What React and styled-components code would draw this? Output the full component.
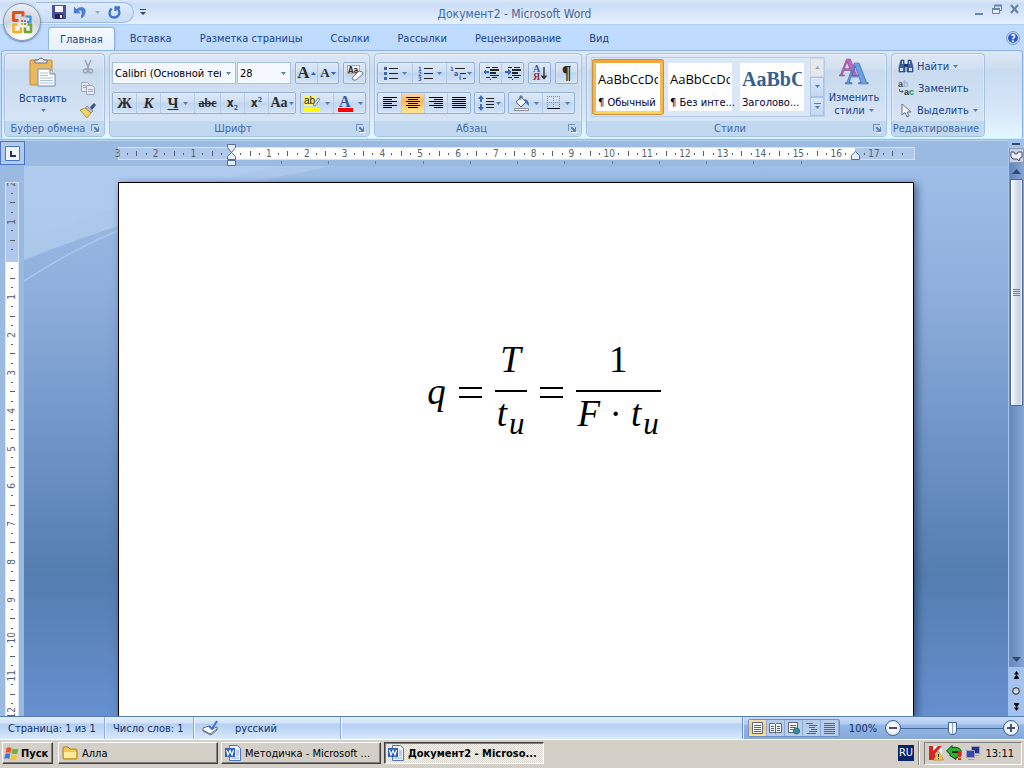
import React, { useState } from 'react';
import styled, { createGlobalStyle, css } from 'styled-components';

const GlobalStyle = createGlobalStyle`
  * {
    box-sizing: border-box;
  }

  body {
    margin: 0;
    overflow: hidden;
    font-family: 'DejaVu Sans Condensed', 'DejaVu Sans', sans-serif;
    font-size: 11px;
    color: #15428b;
  }

  button, select, input {
    font: inherit;
    color: inherit;
    margin: 0;
    padding: 0;
    border: 0;
    background: none;
  }

  svg {
    display: block;
    flex: none;
  }
`;

const Window = styled.div`
  display: flex;
  flex-direction: column;
  height: 100vh;
  background: #bfdbff;
`;

/* ---------- title bar ---------- */

const TitleBar = styled.header`
  position: relative;
  display: flex;
  align-items: center;
  height: 25px;
  flex: none;
  padding: 0 3px 0 36px;
  background: linear-gradient(#dce9fa 0, #cadef7 4px, #dbe8fa 16px, #e6f0fc 24px);
  border-bottom: 1px solid #b0cff7;
`;

const OfficeButton = styled.button`
  position: absolute;
  z-index: 2;
  left: 3px;
  top: 3px;
  width: 38px;
  height: 38px;
  border-radius: 50%;
  border: 1px solid #8596b0;
  display: grid;
  place-items: center;
  background: radial-gradient(circle at 50% 95%, #ffffff 0, #eef1f5 30%, #cdd4de 55%, #f1f4f8 90%);
  box-shadow: 0 1px 2px rgba(40, 70, 120, 0.6);
`;

const QuickAccess = styled.div`
  display: flex;
  align-items: center;
  height: 21px;
  width: 98px;
  padding-left: 16px;
  gap: 8px;
  border: 1px solid #9ebce4;
  border-left: 0;
  border-radius: 0 11px 11px 0;
  background: linear-gradient(#dfebfb, #c8dcf6);
`;

const IconButton = styled.button`
  display: flex;
  align-items: center;
  justify-content: center;
`;

const QuickMenu = styled(IconButton)`
  margin-left: 6px;
`;

const Title = styled.h1`
  flex: 1;
  margin: 0;
  padding: 4px 90px 0 0;
  font-size: 12px;
  font-weight: 400;
  text-align: center;
  color: #4a6591;

  span {
    color: #3e6aaa;
  }
`;

const WindowControls = styled.div`
  display: flex;
  gap: 6px;
  padding-bottom: 4px;
`;

/* ---------- tabs ---------- */

const TabBar = styled.nav`
  display: flex;
  align-items: flex-end;
  height: 25px;
  flex: none;
  padding: 0 4px 0 45px;
  background: #bfdbff;
`;

const Tab = styled.button`
  height: 23px;
  padding: 0 14px;
  white-space: nowrap;
  ${props => props.$active && css`
    margin: 0 1px -1px 3px;
    padding: 0 11px;
    height: 24px;
    border: 1px solid #8db2e3;
    border-bottom: 0;
    border-radius: 4px 4px 0 0;
    background: linear-gradient(#f4f9ff, #e5effb);
    box-shadow: inset 1px 1px 0 #ffffff, 1px 0 2px #a9c6ea;
  `}
`;

const HelpButton = styled(IconButton)`
  margin-left: auto;
  align-self: center;
`;

/* ---------- ribbon ---------- */

const Ribbon = styled.section`
  display: flex;
  align-items: flex-start;
  gap: 4px;
  height: 89px;
  flex: none;
  margin: 0 1px;
  padding: 2px;
  border: 1px solid #8db2e3;
  border-bottom-color: #c6f1fb;
  border-radius: 4px;
  background: linear-gradient(#dbe7f5 0, #cfdff0 16px, #c8dbf0 17px, #d7e6f8 60px, #e2f7ff 86px);
`;

const GroupBox = styled.section`
  display: flex;
  flex-direction: column;
  flex: none;
  width: ${props => props.$width};
  height: 84px;
  border: 1px solid #a6c1e1;
  border-radius: 4px;
  overflow: hidden;
  box-shadow: inset 0 0 0 1px rgba(255, 255, 255, 0.35);
  background: linear-gradient(#dde8f5 0, #d3e1f1 14px, #c8daee 16px, #d6e5f6 68px);
`;

const GroupBody = styled.div`
  flex: 1;
  display: flex;
  flex-direction: ${props => (props.$row ? 'row' : 'column')};
  gap: ${props => props.$gap || '8px'};
  padding: ${props => props.$pad || '8px 2px 0'};
  min-height: 0;
`;

const GroupLabel = styled.div`
  display: flex;
  align-items: center;
  height: 15px;
  padding-right: 4px;
  background: #c1d8f1;
  color: #3e6aaa;

  span {
    flex: 1;
    text-align: center;
    white-space: nowrap;
  }
`;

const Line = styled.div`
  display: flex;
  gap: ${props => props.$gap || '4px'};
`;

const ButtonSet = styled.div`
  display: flex;
  height: 22px;
  border: 1px solid #92b0db;
  border-radius: 2px;
  background: linear-gradient(#dce8f7 0, #cfdff3 9px, #c0d5f0 10px, #d2e3f7 20px);
  box-shadow: inset 0 0 0 1px rgba(255, 255, 255, 0.25);
`;

const ToolButton = styled.button`
  display: flex;
  align-items: center;
  justify-content: center;
  gap: ${props => props.$gap || '4px'};
  width: ${props => props.$width || '21px'};
  color: #222;
  background: ${props => (props.$active ? 'linear-gradient(#fbdbb5 0, #fdb359 8px, #fdbb58 9px, #fde99a 20px)' : 'none')};

  & + & {
    border-left: 1px solid #b4cbe9;
  }
`;

const Glyph = styled.span`
  font-family: 'Liberation Serif', serif;
  font-size: ${props => props.$size || '15px'};
  line-height: 16px;
  font-weight: 700;
  font-style: ${props => (props.$italic ? 'italic' : 'normal')};
  text-decoration: ${props => props.$line || 'none'};
  color: #2b2b2b;
`;

const Script = styled(Glyph)`
  font-family: 'DejaVu Sans Condensed', sans-serif;
  font-size: 12px;

  sub, sup {
    font-size: 7px;
    line-height: 0;
    color: #2d5fb5;
  }
`;

const ComboBox = styled.label`
  display: flex;
  align-items: center;
  width: ${props => props.$width};
  height: 22px;
  padding-right: 4px;
  border: 1px solid #abc1de;
  background: #f5f9ff;

  select {
    flex: 1;
    min-width: 0;
    height: 18px;
    margin-right: 5px;
    padding-left: 2px;
    appearance: none;
    outline: 0;
    overflow: hidden;
    color: #000;
  }
`;

const PasteButton = styled.button`
  display: flex;
  flex-direction: column;
  align-items: center;
  width: 72px;
  gap: 4px;
`;

const SideTools = styled.div`
  display: flex;
  flex-direction: column;
  gap: 6px;
  padding-top: 2px;
`;

const Gallery = styled.div`
  display: flex;
  height: 60px;
  border: 1px solid #b5cdea;
  background: #d9e7f7;
`;

const StyleCard = styled.button`
  display: flex;
  flex-direction: column;
  justify-content: space-between;
  width: 72px;
  height: 56px;
  margin-top: 1px;
  padding: 8px 0 2px 2px;
  border: 4px solid transparent;
  border-color: ${props => (props.$active ? '#f2a63c #f5b84c #fbd45c' : 'transparent')};
  border-radius: 3px;
  background: #fff padding-box;
  color: #000033;
  text-align: left;
  outline: ${props => (props.$active ? '1px solid #c98f3f' : 'none')};
  outline-offset: -1px;
`;

const Sample = styled.span`
  width: 60px;
  overflow: hidden;
  white-space: nowrap;
  line-height: 17px;
  color: ${props => (props.$heading ? '#365f91' : '#000')};
  font-family: ${props => (props.$heading ? "'Liberation Serif', serif" : "'Open Sans', sans-serif")};
  font-size: ${props => (props.$heading ? '20px' : '13px')};
  font-weight: ${props => (props.$heading ? 700 : 400)};
`;

const CardName = styled.span`
  white-space: nowrap;
`;

const GalleryScroll = styled.div`
  display: flex;
  flex-direction: column;
  width: 14px;
  margin-left: 2px;

  button {
    flex: 1;
    display: grid;
    place-items: center;
    border: 1px solid #a9c4e6;
    background: linear-gradient(#d9e8fa, #c3d8f2);
  }

  button:disabled {
    border-color: #d0d6de;
    background: #e6e8eb;
  }
`;

const ChangeStyles = styled.button`
  display: flex;
  flex-direction: column;
  align-items: center;
  width: 62px;
  line-height: 13px;

  svg + span {
    padding-top: 4px;
  }
`;

const CommandButton = styled.button`
  display: flex;
  align-items: center;
  height: 16px;
  gap: 3px;
  white-space: nowrap;
`;

const Inline = styled.span`
  display: flex;
  align-items: center;
  gap: 4px;
`;

/* ---------- document area ---------- */

const Workspace = styled.main`
  flex: 1;
  display: flex;
  min-height: 0;
  border-top: 1px solid #a4bbdc;
`;

const Editor = styled.div`
  flex: 1;
  display: flex;
  flex-direction: column;
  min-width: 0;
  background: #9bbae1;
`;

const RulerRow = styled.div`
  display: flex;
  height: 26px;
  flex: none;
  border-top: 1px solid #b8cfee;
`;

const TabSelector = styled.button`
  display: grid;
  place-items: center;
  width: 25px;
  height: 24px;
  border: 1px solid #4876cc;
  background: #b3caea;
`;

const RulerTrack = styled.div`
  flex: 1;
  display: flex;
  flex-direction: column;
  align-items: center;
  min-width: 0;
  padding-top: 6px;
`;

const Ruler = styled.div`
  position: relative;
  width: 797px;
  height: 13px;
  border: 1px solid #d5e3f6;
  background: linear-gradient(90deg, #b0c8ec 113px, #fff 113px, #fff 736px, #b0c8ec 736px);
`;

const Marks = styled.div`
  display: flex;
  align-items: center;
  width: 794px;
  height: 11px;
  margin-left: -6px;
`;

const Mark = styled.span`
  flex: 1 1 0;
  min-width: 0;
  min-height: 0;
  display: flex;
  align-items: center;
  justify-content: center;
  font-size: 10px;
  line-height: 10px;
  color: #565f6e;

  &::before {
    content: '';
    display: ${props => (props.$kind === 'num' ? 'none' : 'block')};
    width: ${props => (props.$down && props.$kind === 'half' ? '5px' : props.$down ? '2px' : '1px')};
    height: ${props => (!props.$down && props.$kind === 'half' ? '5px' : props.$down ? '1px' : '2px')};
    background: #565f6e;
  }
`;

const TabStops = styled.div`
  display: flex;
  width: 614px;
  height: 3px;
  margin: 1px 44px 0 0;

  span {
    flex: 1;
    border-right: 1px solid #74808f;
  }
`;

const IndentMarker = styled.div`
  position: absolute;
  left: ${props => props.$left};
  top: ${props => props.$top};
`;

const Canvas = styled.div`
  flex: 1;
  display: flex;
  min-height: 0;
`;

const SideRuler = styled.div`
  width: 24px;
  flex: none;
  padding: 16px 5px 0;
  overflow: hidden;
`;

const SideScale = styled.div`
  width: 14px;
  height: 100%;
  border: 1px solid #d5e3f6;
  border-bottom: 0;
  overflow: hidden;
  background: linear-gradient(#b0c8ec 79px, #fff 79px);
`;

const SideMarks = styled.div`
  display: flex;
  flex-direction: column;
  align-items: center;
  width: 12px;
  height: 567px;
  margin-top: -4px;
`;

const Upward = styled.span`
  writing-mode: vertical-rl;
  transform: rotate(180deg);
`;

const Desk = styled.div`
  position: relative;
  flex: 1;
  display: flex;
  justify-content: center;
  padding-top: 16px;
  overflow: hidden;
  background: linear-gradient(#9fbfe9 0, #8fb0dc 120px, #6f94c8 270px, #547db0 410px, #6690ce 549px);
`;

const Swoosh = styled.svg`
  position: absolute;
  left: 0;
  top: 0;
`;

const Page = styled.article`
  position: relative;
  width: 796px;
  max-width: 100%;
  padding-top: 155px;
  border: 1px solid #000;
  border-bottom: 0;
  background: #fff;
  box-shadow: 3px 2px 8px rgba(20, 40, 80, 0.6);
`;

const Formula = styled.div`
  display: flex;
  align-items: center;
  justify-content: center;
  gap: 13px;
  padding-left: 56px;
  font-family: 'Liberation Serif', serif;
  font-size: 37px;
  line-height: 44px;
  color: #000;
`;

const Fraction = styled.span`
  display: flex;
  flex-direction: column;
  align-items: center;
`;

const Numerator = styled.span`
  align-self: stretch;
  height: 54px;
  text-align: center;
  border-bottom: 2px solid #000;
`;

const Denominator = styled.span`
  height: 54px;
  padding: 0 2px;
  white-space: nowrap;

  sub {
    margin-left: 2px;
    font-size: 31px;
    line-height: 0;
    vertical-align: -8px;
  }
`;

const Equals = styled.span`
  width: 23px;
  height: 11px;
  border-top: 2px solid #000;
  border-bottom: 2px solid #000;
`;

const ScrollColumn = styled.aside`
  display: flex;
  flex-direction: column;
  align-items: center;
  width: 16px;
  flex: none;
  background: #a3c2ee;
`;

const SplitHandle = styled.div`
  width: 8px;
  height: 2px;
  margin: 3px 0;
  background: #3c4a66;
`;

const RulerToggle = styled.button`
  display: grid;
  place-items: center;
  width: 15px;
  height: 15px;
  border: 1px solid #8c9bb8;
  background: #c7d0e2;
`;

const ScrollTrack = styled.div`
  flex: 1;
  display: flex;
  flex-direction: column;
  width: 15px;
  border-left: 1px solid #6d8fc2;
  background: linear-gradient(90deg, #6488bb, #86a6d4);
`;

const ScrollArrow = styled.button`
  display: grid;
  place-items: center;
  height: 16px;
`;

const ScrollThumb = styled.div`
  display: grid;
  place-items: center;
  flex: 0 0 45%;
  width: 13px;
  border: 1px solid #56698c;
  border-radius: 1px;
  background: linear-gradient(90deg, #fff, #dde6f2 4px, #c3d3e8 9px, #f2f6fb);
`;

const Spacer = styled.div`
  flex: 1;
`;

const BrowseButtons = styled.div`
  display: flex;
  flex-direction: column;
  align-items: center;
  gap: 8px;
  padding: 4px 0 5px;
`;

/* ---------- status bar ---------- */

const StatusBar = styled.footer`
  display: flex;
  height: 23px;
  flex: none;
  border-top: 1px solid #567db1;
  color: #10306b;
  background: linear-gradient(#e3eefc 0, #d2e2f8 6px, #b4d0f3 7px, #c4daf6 14px, #d8e8fb 21px);
`;

const StatusItem = styled.button`
  display: flex;
  align-items: center;
  gap: 16px;
  width: ${props => props.$width};
  padding-left: 8px;
  white-space: nowrap;
  border-right: 1px solid #8cadd9;
  box-shadow: 1px 0 0 #f0f6fe;
`;

const ViewArea = styled.div`
  display: flex;
  align-items: center;
  margin-left: auto;
  width: 282px;
  padding: 0 5px;
  border-left: 1px solid #6a93cc;
  box-shadow: inset 1px 0 0 #dcebfd;
  background: linear-gradient(#c9ddf7 0, #b3cdf0 7px, #94b7e6 8px, #86a9d8 21px);
`;

const ViewButtons = styled.div`
  display: flex;
  height: 18px;
  border: 1px solid #6d91c5;
  border-radius: 2px;
  background: #b7cdea;

  button {
    width: 18px;
    display: grid;
    place-items: center;
    border-right: 1px solid #8dacd8;
  }

  button:first-child {
    background: linear-gradient(#fbdcae, #fdc260 8px, #fde59a);
  }
`;

const ZoomText = styled.button`
  width: 44px;
  margin-left: 1px;
`;

const RoundButton = styled.button`
  display: grid;
  place-items: center;
  width: 16px;
  height: 16px;
  flex: none;
  border: 1px solid #44628f;
  border-radius: 50%;
  background: radial-gradient(#fff 30%, #c7d8ef);
`;

const ZoomSlider = styled.input`
  flex: 1;
  min-width: 0;
  height: 14px;
  appearance: none;
  background: linear-gradient(#44679d, #44679d) center / 100% 1px no-repeat;

  &::-webkit-slider-thumb {
    appearance: none;
    width: 9px;
    height: 13px;
    border: 1px solid #44628f;
    border-radius: 1px 1px 5px 5px;
    background: linear-gradient(90deg, #fff 3px, #8ba5cd 3px, #8ba5cd 4px, #e8f0fb 4px);
  }
`;

/* ---------- taskbar ---------- */

const Taskbar = styled.footer`
  display: flex;
  align-items: center;
  gap: 3px;
  height: 29px;
  flex: none;
  padding: 0 2px 2px;
  border-top: 1px solid #fff;
  background: #d4d0c8;
  color: #000;
`;

const TaskButton = styled.button`
  display: flex;
  align-items: center;
  gap: 4px;
  width: 160px;
  height: 22px;
  padding: 0 3px;
  border: 1px solid;
  white-space: nowrap;
  overflow: hidden;
  font-weight: ${props => (props.$bold ? 700 : 400)};
  border-color: ${props => (props.$pressed ? '#404040 #fff #fff #404040' : '#fff #404040 #404040 #fff')};
  box-shadow: inset ${props => (props.$pressed ? '1px 1px' : '-1px -1px')} 0 #808080;
  background: ${props => (props.$pressed ? 'repeating-conic-gradient(#fff 0 25%, #d4d0c8 0 50%) 0 0 / 2px 2px' : '#d4d0c8')};
`;

const StartButton = styled(TaskButton)`
  gap: 1px;
  width: 51px;
  margin-right: 2px;
  padding: 0 1px;
`;

const LanguageBadge = styled.span`
  margin-left: auto;
  padding: 0 1px;
  line-height: 16px;
  color: #fff;
  background: #0a246a;
`;

const Tray = styled.div`
  display: flex;
  align-items: center;
  gap: 2px;
  width: 98px;
  height: 23px;
  padding: 0 7px 0 3px;
  border: 1px solid;
  border-color: #808080 #fff #fff #808080;

  time {
    margin-left: auto;
  }
`;

const TrayDivider = styled.div`
  width: 2px;
  height: 24px;
  margin: 0 1px;
  border-left: 1px solid #808080;
  border-right: 1px solid #fff;
`;

/* ---------- icons ---------- */

const Caret = ({ color = '#567db1', up }) => (
  <svg width="5" height="3" viewBox="0 0 5 3">
    <path d={up ? 'M0 3h5L2.500 0z' : 'M0 0h5L2.500 3z'} fill={color} />
  </svg>
);

const OfficeLogo = () => (
  <svg width="26" height="26" viewBox="0 0 26 26" fill="none">
    <path d="M9.500 11.500H4.500v-8h9.500v4" stroke="#e2521b" strokeWidth="3" strokeLinejoin="round" />
    <path d="M16.500 7.500h5v5.500h-3.500" stroke="#3f91d8" strokeWidth="2.200" strokeLinejoin="round" />
    <path d="M12 18.500v4.500H4.500v-7.500h4" stroke="#f6b01e" strokeWidth="2.600" strokeLinejoin="round" />
    <path d="M16 18.500v4.500h6v-7.500h-3.500" stroke="#72a534" strokeWidth="2.600" strokeLinejoin="round" />
    <path d="M12 11h2v2h-2z" fill="#e2521b" />
    <path d="M15 11h2v2h-2z" fill="#3f91d8" />
    <path d="M12 14h2v2h-2z" fill="#f6b01e" />
    <path d="M15 14h2v2h-2z" fill="#72a534" />
  </svg>
);

const SaveIcon = () => (
  <svg width="14" height="14" viewBox="0 0 14 14">
    <path d="M0 0h14v14H1.500L0 12.500z" fill="#4a4f9f" />
    <path d="M3 1h8v6H3z" fill="#f4f6fc" />
    <path d="M3 9h8v5H3z" fill="#20255c" />
    <path d="M8 10h2v3H8z" fill="#fff" />
  </svg>
);

const UndoIcon = () => (
  <svg width="13" height="13" viewBox="0 0 13 13">
    <path d="M0 1v6h6L4 5c3-2 5.500 0 3 6l1 1C13 7 12 1 7 1.500 5 1.700 3.500 2.500 2.500 3.500z" fill="#4c7fd6" stroke="#3865b8" strokeWidth=".5" />
  </svg>
);

const RedoIcon = () => (
  <svg width="13" height="13" viewBox="0 0 13 13">
    <path d="M7.500 5V1.500H12M9.500 2.500c4 4 1 9-3.500 9S0 6.500 3.500 2.500" fill="none" stroke="#3e73cc" strokeWidth="2.300" />
  </svg>
);

const LauncherIcon = () => (
  <svg width="9" height="9" viewBox="0 0 9 9" shapeRendering="crispEdges">
    <path d="M0 7V0h7v1H1v6z" fill="#7190bd" />
    <path d="M3 3h2v1h1v1h1V3h1v5H3V7h2V6H4V5H3z" fill="#5f80b2" />
    <path d="M4 8h5V4" stroke="#fff" fill="none" />
  </svg>
);

const PasteIcon = () => (
  <svg width="28" height="31" viewBox="0 0 28 31">
    <rect x="1" y="3" width="22" height="25" rx="1" fill="#eab85c" stroke="#c98b35" />
    <path d="M6 3h3q3-4 6 0h3v3H6z" fill="#e9e9ec" stroke="#6c6f78" />
    <path d="M9 12h12l5 5v12H9z" fill="#fff" stroke="#6c88b8" />
    <path d="M21 12v5h5" fill="#c9dcf5" stroke="#6c88b8" />
    <path d="M11 16h8M11 18.500h8M11 21h13M11 23.500h13M11 26h13" stroke="#a9bfdd" />
  </svg>
);

const CutIcon = () => (
  <svg width="16" height="16" viewBox="0 0 16 16" fill="none" stroke="#9da5b3" strokeWidth="1.500">
    <path d="M5 1l4 9M11 1L7 10" />
    <circle cx="5.500" cy="12" r="2" />
    <circle cx="10.500" cy="12" r="2" />
  </svg>
);

const CopyIcon = () => (
  <svg width="16" height="15" viewBox="0 0 16 15" fill="#e6ebf4" stroke="#9aa8bf">
    <path d="M1.500 1.500h6l2 2v7h-8z" />
    <path d="M6.500 4.500h6l2 2v7h-8z" />
    <path d="M8 8.500h5M8 10.500h5M3 4.500h3M3 6.500h3" />
  </svg>
);

const BrushIcon = () => (
  <svg width="17" height="16" viewBox="0 0 17 16">
    <path d="M11 5l4-4 2 2-4 5z" fill="#3f4f8c" />
    <path d="M8 4l6 5-2 2-6-5z" fill="#b9bfca" stroke="#6f7684" strokeWidth=".6" />
    <path d="M1 8l5-2 6 5-4 5z" fill="#f2d268" stroke="#9b7a22" strokeWidth=".7" />
  </svg>
);

const EraserIcon = () => (
  <svg width="18" height="18" viewBox="0 0 18 18">
    <rect x="1.500" y="1.500" width="12" height="8" fill="#f4f7fb" stroke="#9aa9c0" />
    <text x="2" y="9" fontSize="8" fontWeight="700" fill="#333">Aa</text>
    <path d="M6 14l7-7q4 0 4 3l-7 6q-4 1-4-2z" fill="#fff" stroke="#6c7897" />
  </svg>
);

const bulletY = [3, 8, 13];

const BulletsIcon = () => (
  <svg width="14" height="16" viewBox="0 0 14 16" shapeRendering="crispEdges">
    {bulletY.map(y => <path key={y} d={`M0 ${y - 1}h3v3H0z`} fill="#3a63b0" />)}
    {bulletY.map(y => <path key={y} d={`M5 ${y}h9v1H5z`} fill="#222" />)}
  </svg>
);

const NumbersIcon = () => (
  <svg width="15" height="16" viewBox="0 0 15 16">
    {bulletY.map((y, i) => (
      <text key={y} x="0" y={y + 3} fontSize="6" fontWeight="700" fill="#3a63b0">{i + 1}</text>
    ))}
    {bulletY.map(y => <path key={y} d={`M6 ${y}h9v1H6z`} fill="#222" />)}
  </svg>
);

const MultiLevelIcon = () => (
  <svg width="16" height="16" viewBox="0 0 16 16">
    <text x="0" y="6" fontSize="6" fontWeight="700" fill="#3a63b0">1</text>
    <text x="4" y="11" fontSize="7" fontWeight="700" fill="#3a63b0">a</text>
    <text x="9" y="15" fontSize="7" fontWeight="700" fill="#3a63b0">i</text>
    <path d="M5 3h10v1H5zM10 8h6v1h-6zM13 13h3v1h-3z" fill="#222" />
  </svg>
);

const IndentIcon = ({ left }) => (
  <svg width="16" height="16" viewBox="0 0 16 16" shapeRendering="crispEdges">
    <path d="M3 2h4v1H3zM9 2h6v1H9zM7 4h9v2H7zM7 7h6v2H7zM7 10h9v1H7zM3 12h4v1H3zM9 12h5v1H9zM7 14h1v1H7z" fill="#222" />
    <path d={left ? 'M0 7l3-3v2h3v2H3v2z' : 'M6 7L3 4v2H0v2h3v2z'} fill="#2f66c8" />
  </svg>
);

const SortIcon = () => (
  <svg width="16" height="18" viewBox="0 0 16 18" fontFamily="Liberation Serif" fontWeight="700" fontSize="10">
    <text x="1" y="8" fill="#3357a5">А</text>
    <text x="1" y="16" fill="#9c2d3a">Я</text>
    <path d="M12 3v12M9.500 11.500l2.500 3 2.500-3" stroke="#222" strokeWidth="1.300" fill="none" />
  </svg>
);

const alignLines = {
  left: [[0, 14], [0, 9], [0, 14], [0, 9], [0, 14], [0, 9]],
  center: [[0, 14], [2, 10], [0, 14], [2, 10], [0, 14], [2, 10]],
  right: [[0, 14], [5, 9], [0, 14], [5, 9], [0, 14], [5, 9]],
  justify: [[0, 14], [0, 14], [0, 14], [0, 14], [0, 14], [0, 14]],
};

const AlignIcon = ({ kind }) => (
  <svg width="14" height="12" viewBox="0 0 14 12" shapeRendering="crispEdges">
    {alignLines[kind].map(([x, w], i) => (
      <rect key={i} x={x} y={i * 2} width={w} height="1" />
    ))}
  </svg>
);

const SpacingIcon = () => (
  <svg width="16" height="16" viewBox="0 0 16 16">
    <path d="M3 0l3 4H4v3H2V4H0zM3 16l3-4H4V9H2v3H0z" fill="#3e6fc4" />
    <path d="M8 3.500h8M8 6.500h8M8 9.500h8M8 12.500h8" stroke="#222" />
  </svg>
);

const FillIcon = () => (
  <svg width="17" height="17" viewBox="0 0 17 17">
    <path d="M3 7l5-5 5 5-5 5z" fill="#f4f7fc" stroke="#55617b" />
    <path d="M7 5V1h2v3" fill="none" stroke="#55617b" />
    <path d="M11 4q5 0 5 7l-3-3z" fill="#3f6fbf" />
    <path d="M1.500 13.500h14v2h-14z" fill="#fff" stroke="#8b8f99" />
  </svg>
);

const BorderIcon = () => (
  <svg width="14" height="14" viewBox="0 0 14 14" shapeRendering="crispEdges">
    <path d="M0 .5h13M0 6.500h13M.5 0v12M6.500 0v12M12.500 0v12" stroke="#7d8798" strokeDasharray="1 1" />
    <path d="M0 12h13v1H0z" fill="#111" />
  </svg>
);

const StylesIcon = () => (
  <svg width="30" height="30" viewBox="0 0 30 30" fontFamily="Liberation Serif" fontWeight="700">
    <text x="0" y="19" fontSize="26" fill="#c168bd" stroke="#8d3f96" strokeWidth=".6">A</text>
    <text x="6" y="27" fontSize="32" fill="#6f9fe0" stroke="#3a67b0" strokeWidth=".7">A</text>
  </svg>
);

const FindIcon = () => (
  <svg width="16" height="14" viewBox="0 0 16 14">
    <path d="M3 1h3v3l1 2v7H1V8zM10 1h3l2 7v5H9V6l1-2z" fill="#3d5f9e" stroke="#22396b" strokeWidth=".6" />
    <path d="M6 5h4v3H6z" fill="#22396b" />
    <path d="M2 9h3v3H2zM11 9h3v3h-3zM4 2h1v3H4zM11 2h1v3h-1z" fill="#c9dbf5" />
  </svg>
);

const ReplaceIcon = () => (
  <svg width="17" height="16" viewBox="0 0 17 16" fontFamily="Liberation Sans" fontWeight="700" fontSize="9">
    <text x="0" y="7" fill="#4b4b4b">a<tspan fill="#a8b3c4">b</tspan></text>
    <text x="6" y="15" fill="#333">a<tspan fill="#1d8f32">c</tspan></text>
    <path d="M1.500 9v2.500H5M3.500 10L5 11.500 3.500 13" fill="none" stroke="#3e6aaa" />
  </svg>
);

const CursorIcon = () => (
  <svg width="16" height="15" viewBox="0 0 16 15">
    <path d="M4 1v11l3-2.500L9 14l2-1-2-4h4z" fill="#fff" stroke="#5f6d85" />
  </svg>
);

const HelpIcon = () => (
  <svg width="14" height="14" viewBox="0 0 14 14">
    <circle cx="7" cy="7" r="6.300" fill="#fff" stroke="#5a83cf" />
    <circle cx="7" cy="7" r="5" fill="#2a5bd0" />
    <text x="7" y="10.500" fontSize="10" fontWeight="700" textAnchor="middle" fill="#fff">?</text>
  </svg>
);

const MinimizeIcon = () => (
  <svg width="12" height="12" viewBox="0 0 12 12"><path d="M2 9h8v2H2z" fill="#6984ad" /></svg>
);

const RestoreIcon = () => (
  <svg width="12" height="12" viewBox="0 0 12 12" fill="none" stroke="#6984ad">
    <path d="M3.500 4V1.500h7v5H9" />
    <path d="M3 1.500h8" strokeWidth="2" />
    <path d="M1.500 4.500h7v5h-7z" fill="#e6f0fc" />
    <path d="M1 5h8" strokeWidth="2" />
  </svg>
);

const CloseIcon = () => (
  <svg width="12" height="12" viewBox="0 0 12 12"><path d="M2 1l7 8M9 1l-7 8" stroke="#6984ad" strokeWidth="2.200" /></svg>
);

const FolderIcon = () => (
  <svg width="16" height="14" viewBox="0 0 16 14">
    <path d="M1 2q0-1 1-1h4l2 2h6q1 0 1 1v8q0 1-1 1H2q-1 0-1-1z" fill="#f3c94e" stroke="#a97f1a" />
    <path d="M2 6h12v6H2z" fill="#fdeb9b" />
  </svg>
);

const WordIcon = () => (
  <svg width="16" height="16" viewBox="0 0 16 16">
    <path d="M4.500.5h8l3 3v12h-11z" fill="#eef4ff" stroke="#4a74c0" />
    <path d="M11 6h3M11 8h3M11 10h3M6 13h8" stroke="#8fabdb" />
    <rect x="0" y="3" width="10" height="9" fill="#2f5fbc" />
    <path d="M1.500 5l1.500 5 2-4.500L7 10l1.500-5" fill="none" stroke="#fff" strokeWidth="1.200" />
  </svg>
);

const WindowsIcon = () => (
  <svg width="16" height="15" viewBox="0 0 16 15">
    <path d="M2.500 2q2.500-1.500 5 0L6.500 7q-2.500-1.500-5 0z" fill="#e8512a" />
    <path d="M8.500 2.500q3 1.500 6 0l-1 5q-3 1.500-6 0z" fill="#6fb13a" />
    <path d="M1.300 8q2.500-1.500 5 0l-1 5q-2.500-1.500-5 0z" fill="#3f78d8" />
    <path d="M7.300 8.500q3 1.500 6 0l-1 5q-3 1.500-6 0z" fill="#f7c52c" />
  </svg>
);

const ProofIcon = () => (
  <svg width="17" height="16" viewBox="0 0 17 16">
    <path d="M1 8l6-2 3 3 5-2v3l-6 5-8-4z" fill="#fff" stroke="#5b6a88" />
    <path d="M1 10l7 4 7-5" fill="none" stroke="#5b6a88" />
    <path d="M7 6l3 3 5-8" fill="none" stroke="#3c72cf" strokeWidth="2" />
  </svg>
);

const KasperskyIcon = () => (
  <svg width="16" height="16" viewBox="0 0 16 16">
    <path d="M1 1h13v14H1z" fill="#f5f5f5" />
    <path d="M1 1h4v5l5-5h4L7 9l2 6H1z" fill="#d82727" />
    <path d="M10.500 6l5 9h-10z" fill="#f8cf3a" stroke="#a87b0d" strokeWidth=".7" />
    <path d="M10 9h1v3h-1zM10 13h1v1h-1z" fill="#222" />
  </svg>
);

const SyncIcon = () => (
  <svg width="17" height="16" viewBox="0 0 17 16">
    <path d="M.5 6L6 .5v2q7-1 9 3v5l-4 2h-1v2L4.500 11H4V9z" fill="#27b531" stroke="#08400c" />
    <path d="M6 6h6v2H6z" fill="#102a12" />
    <path d="M12 6h3v6h-3zM12 13h3v2h-3z" fill="#d22b1f" />
  </svg>
);

const NetworkIcon = () => (
  <svg width="16" height="16" viewBox="0 0 16 16" stroke="#9a9eb8">
    <path d="M6.500 1.500h8v7h-8z" fill="#26318e" />
    <path d="M1.500 5.500h8v7h-8z" fill="#3946a8" />
    <path d="M3 14.500h6M10 10.500h4" />
  </svg>
);

const viewIcons = [
  <path key="p" d="M1.500.5h10v11h-10zM3 3.500h7M3 5.500h7M3 7.500h7M3 9.500h7" fill="#fff" />,
  <path key="r" d="M.5 1.500h5l1 1 1-1h5v9h-5l-1 1-1-1h-5zM6.500 2v9M2 4.500h3M2 6.500h3M2 8.500h3M8 4.500h3M8 6.500h3M8 8.500h3" fill="#f4f7fc" />,
  <g key="w"><path d="M1.500.5h9v10h-9zM3 3.500h6M3 5.500h6M3 7.500h4" fill="#fff" /><circle cx="9.500" cy="9" r="3" fill="#3b86c6" stroke="#2b7a3d" /></g>,
  <path key="o" d="M1 1.500h7M4 3.500h8M4 5.500h6M6 7.500h6M4 9.500h8M2 11.500h9" />,
  <path key="d" d="M1 1.500h11M1 3.500h11M1 5.500h11M1 7.500h11M1 9.500h11M1 11.500h11" />,
];

/* ---------- parts ---------- */

const tabs = ['Главная', 'Вставка', 'Разметка страницы', 'Ссылки', 'Рассылки', 'Рецензирование', 'Вид'];
const viewNames = ['Разметка страницы', 'Режим чтения', 'Веб-документ', 'Структура', 'Черновик'];

const Group = ({ label, width, launcher = true, children, ...body }) => (
  <GroupBox $width={width} aria-label={label}>
    <GroupBody {...body}>{children}</GroupBody>
    <GroupLabel>
      <span>{label}</span>
      {launcher && <IconButton aria-label={`${label}: параметры`}><LauncherIcon /></IconButton>}
    </GroupLabel>
  </GroupBox>
);

// One mark per quarter of a centimetre, a number on each whole one
const scale = (from, count) => Array.from({ length: count }, (_, i) => {
  const quarter = from * 4 + i;
  if (quarter === 0) return { kind: 'num', value: '' };
  if (quarter % 4 === 0) return { kind: 'num', value: Math.abs(quarter / 4) };
  return { kind: quarter % 2 === 0 ? 'half' : 'dot', value: '' };
});

const ClipboardGroup = () => (
  <Group label="Буфер обмена" width="101px" $row $gap="0" $pad="3px 2px 0">
    <PasteButton>
      <PasteIcon />
      Вставить
      <Caret />
    </PasteButton>
    <SideTools>
      <IconButton aria-label="Вырезать"><CutIcon /></IconButton>
      <IconButton aria-label="Копировать"><CopyIcon /></IconButton>
      <IconButton aria-label="Формат по образцу"><BrushIcon /></IconButton>
    </SideTools>
  </Group>
);

const FontGroup = () => (
  <Group label="Шрифт" width="261px">
    <Line>
      <Line $gap="1px">
        <ComboBox $width="124px">
          <select aria-label="Шрифт" defaultValue="calibri">
            <option value="calibri">Calibri (Основной текст)</option>
          </select>
          <Caret />
        </ComboBox>
        <ComboBox $width="54px">
          <select aria-label="Размер шрифта" defaultValue="28">
            <option>28</option>
          </select>
          <Caret />
        </ComboBox>
      </Line>
      <ButtonSet>
        <ToolButton $gap="1px" aria-label="Увеличить размер"><Glyph $size="17px">A</Glyph><Caret up color="#2d5fb5" /></ToolButton>
        <ToolButton $gap="1px" aria-label="Уменьшить размер"><Glyph $size="13px">A</Glyph><Caret color="#2d5fb5" /></ToolButton>
      </ButtonSet>
      <ButtonSet>
        <ToolButton aria-label="Очистить формат"><EraserIcon /></ToolButton>
      </ButtonSet>
    </Line>
    <Line>
      <ButtonSet>
        <ToolButton $width="23px"><Glyph>Ж</Glyph></ToolButton>
        <ToolButton $width="24px"><Glyph $italic>К</Glyph></ToolButton>
        <ToolButton $width="34px"><Glyph $line="underline">Ч</Glyph><Caret /></ToolButton>
        <ToolButton $width="26px"><Glyph $size="12px" $line="line-through">abc</Glyph></ToolButton>
        <ToolButton $width="24px"><Script>x<sub>2</sub></Script></ToolButton>
        <ToolButton $width="24px"><Script>x<sup>2</sup></Script></ToolButton>
        <ToolButton $width="27px" $gap="1px"><Glyph $size="14px">Aa</Glyph><Caret /></ToolButton>
      </ButtonSet>
      <ButtonSet>
        <ToolButton $width="32px" aria-label="Цвет выделения">
          <svg width="17" height="17" viewBox="0 0 17 17">
            <path d="M0 1h11v10H0z" fill="#fbf36a" />
            <text x="0" y="9" fontSize="10" fontFamily="Liberation Sans" fill="#222">ab</text>
            <path d="M9 10l5-7 2 1-5 7z" fill="#dfe6f2" stroke="#55617b" strokeWidth=".7" />
            <path d="M0 13h16v4H0z" fill="#ffff00" />
          </svg>
          <Caret />
        </ToolButton>
        <ToolButton $width="32px" aria-label="Цвет текста">
          <svg width="17" height="17" viewBox="0 0 17 17">
            <text x="2" y="12" fontSize="16" fontWeight="700" fontFamily="Liberation Serif" fill="#3357a5">A</text>
            <path d="M1 13h15v4H1z" fill="#ff0000" />
          </svg>
          <Caret />
        </ToolButton>
      </ButtonSet>
    </Line>
  </Group>
);

const ParagraphGroup = () => {
  const [align, setAlign] = useState('center');

  return (
    <Group label="Абзац" width="208px">
      <Line>
        <ButtonSet>
          <ToolButton $width="34px" aria-label="Маркеры"><BulletsIcon /><Caret /></ToolButton>
          <ToolButton $width="34px" aria-label="Нумерация"><NumbersIcon /><Caret /></ToolButton>
          <ToolButton $width="28px" $gap="1px" aria-label="Многоуровневый список"><MultiLevelIcon /><Caret /></ToolButton>
        </ButtonSet>
        <ButtonSet>
          <ToolButton aria-label="Уменьшить отступ"><IndentIcon left /></ToolButton>
          <ToolButton $width="22px" aria-label="Увеличить отступ"><IndentIcon /></ToolButton>
        </ButtonSet>
        <ButtonSet>
          <ToolButton aria-label="Сортировка"><SortIcon /></ToolButton>
        </ButtonSet>
        <ButtonSet>
          <ToolButton aria-label="Непечатаемые знаки"><Glyph $size="18px">¶</Glyph></ToolButton>
        </ButtonSet>
      </Line>
      <Line $gap="3px">
        <ButtonSet>
          {Object.keys(alignLines).map(kind => (
            <ToolButton key={kind} $width="23px" $active={align === kind} onClick={() => setAlign(kind)} aria-label={kind}>
              <AlignIcon kind={kind} />
            </ToolButton>
          ))}
        </ButtonSet>
        <ButtonSet>
          <ToolButton $width="29px" $gap="2px" aria-label="Интервал"><SpacingIcon /><Caret /></ToolButton>
        </ButtonSet>
        <ButtonSet>
          <ToolButton $width="33px" aria-label="Заливка"><FillIcon /><Caret /></ToolButton>
          <ToolButton $width="32px" aria-label="Границы"><BorderIcon /><Caret /></ToolButton>
        </ButtonSet>
      </Line>
    </Group>
  );
};

const StylesGroup = () => (
  <Group label="Стили" width="301px" $row $gap="1px" $pad="3px 4px 0">
    <Gallery>
      <StyleCard $active>
        <Sample>AaBbCcDc</Sample>
        <CardName>¶ Обычный</CardName>
      </StyleCard>
      <StyleCard>
        <Sample>AaBbCcDc</Sample>
        <CardName>¶ Без инте...</CardName>
      </StyleCard>
      <StyleCard>
        <Sample $heading>AaBbCc</Sample>
        <CardName>Заголово...</CardName>
      </StyleCard>
      <GalleryScroll>
        <button disabled aria-label="Вверх"><Caret up color="#a0a8b4" /></button>
        <button aria-label="Вниз"><Caret /></button>
        <button aria-label="Все стили">
          <svg width="7" height="6" viewBox="0 0 7 6"><path d="M0 0h7v1H0zM1 3h5L3.500 6z" fill="#567db1" /></svg>
        </button>
      </GalleryScroll>
    </Gallery>
    <ChangeStyles>
      <StylesIcon />
      <span>Изменить</span>
      <Inline>стили <Caret /></Inline>
    </ChangeStyles>
  </Group>
);

const EditingGroup = () => (
  <Group label="Редактирование" width="94px" launcher={false} $gap="6px" $pad="4px 6px 0">
    <CommandButton><FindIcon /> <Inline>Найти <Caret /></Inline></CommandButton>
    <CommandButton><ReplaceIcon /> Заменить</CommandButton>
    <CommandButton><CursorIcon /> <Inline>Выделить <Caret /></Inline></CommandButton>
  </Group>
);

const EditorArea = () => (
  <Editor>
    <RulerRow>
      <TabSelector aria-label="Табуляция">
        <svg width="15" height="15" viewBox="0 0 15 15">
          <path d="M.5.500h14v14H.5z" fill="#f1f5fb" stroke="#4876cc" />
          <path d="M6 5v5h5" stroke="#1d355f" strokeWidth="2" fill="none" />
        </svg>
      </TabSelector>
      <RulerTrack>
        <Ruler>
          <Marks>
            {scale(-3, 84).map((mark, i) => (
              <Mark key={i} $kind={mark.kind}>{mark.value}</Mark>
            ))}
          </Marks>
          <IndentMarker $left="108px" $top="-4px">
            <svg width="9" height="22" viewBox="0 0 9 22" fill="#e7eef9" stroke="#4f6f9f">
              <path d="M.5.500h8v3l-4 5-4-5zM4.500 8.500l4 4v3h-8v-3zM.5 16.500h8v5h-8z" />
            </svg>
          </IndentMarker>
          <IndentMarker $left="732px" $top="3px">
            <svg width="9" height="9" viewBox="0 0 9 9"><path d="M4.500.500l4 4v4h-8v-4z" fill="#e7eef9" stroke="#4f6f9f" /></svg>
          </IndentMarker>
        </Ruler>
        <TabStops>
          {Array.from({ length: 13 }, (_, i) => <span key={i} />)}
        </TabStops>
      </RulerTrack>
    </RulerRow>
    <Canvas>
      <SideRuler>
        <SideScale>
          <SideMarks>
            {scale(-2, 60).map((mark, i) => (
              <Mark key={i} $down $kind={mark.kind}><Upward>{mark.value}</Upward></Mark>
            ))}
          </SideMarks>
        </SideScale>
      </SideRuler>
      <Desk>
        <Swoosh width="400" height="130" viewBox="0 0 400 130">
          <path d="M0 0h310Q180 22 94 60 40 78 0 94z" fill="#b9d3ef" opacity=".65" />
          <path d="M0 94Q130 38 310 0h-50Q100 30 0 80z" fill="#a9c6ea" opacity=".5" />
          <path d="M0 115Q50 82 110 58" fill="none" stroke="#b4cdee" strokeWidth="1.500" opacity=".7" />
        </Swoosh>
        <Page>
          <Formula>
            <i>q</i>
            <Equals role="img" aria-label="равно" />
            <Fraction>
              <Numerator><i>T</i></Numerator>
              <Denominator><i>t<sub>u</sub></i></Denominator>
            </Fraction>
            <Equals role="img" aria-label="равно" />
            <Fraction>
              <Numerator>1</Numerator>
              <Denominator><i>F</i> · <i>t<sub>u</sub></i></Denominator>
            </Fraction>
          </Formula>
        </Page>
      </Desk>
    </Canvas>
  </Editor>
);

const VerticalScroll = () => (
  <ScrollColumn>
    <SplitHandle />
    <RulerToggle aria-label="Линейка">
      <svg width="13" height="12" viewBox="0 0 13 12"><path d="M1 2h3l1 2h2l1-2h4v5l-2 1-1 3-2-2H3L1 7z" fill="#eef2fa" stroke="#44506b" /></svg>
    </RulerToggle>
    <ScrollTrack>
      <ScrollArrow aria-label="Вверх"><svg width="9" height="5" viewBox="0 0 9 5"><path d="M0 5h9L4.500 0z" fill="#34496f" /></svg></ScrollArrow>
      <ScrollThumb>
        <svg width="7" height="7" viewBox="0 0 7 7"><path d="M0 .5h7M0 2.500h7M0 4.500h7M0 6.500h7" stroke="#6d7f9e" /></svg>
      </ScrollThumb>
      <Spacer />
      <ScrollArrow aria-label="Вниз"><svg width="9" height="5" viewBox="0 0 9 5"><path d="M0 0h9L4.500 5z" fill="#34496f" /></svg></ScrollArrow>
    </ScrollTrack>
    <BrowseButtons>
      <IconButton aria-label="Предыдущая страница"><svg width="7" height="8" viewBox="0 0 7 8"><path d="M1 3.500L3.500 0 6 3.500zM1 7L3.500 3.500 6 7zM1 7h5v1H1z" /></svg></IconButton>
      <IconButton aria-label="Выбор объекта перехода"><svg width="8" height="8" viewBox="0 0 8 8"><circle cx="4" cy="4" r="3.300" fill="#d3d7de" stroke="#222" /></svg></IconButton>
      <IconButton aria-label="Следующая страница"><svg width="7" height="8" viewBox="0 0 7 8"><path d="M1 4.500L3.500 8 6 4.500zM1 1L3.500 4.500 6 1zM1 0h5v1H1z" /></svg></IconButton>
    </BrowseButtons>
  </ScrollColumn>
);

const App = () => {
  const [activeTab, setActiveTab] = useState('Главная');
  const [zoom, setZoom] = useState(100);

  return (
    <Window>
      <GlobalStyle />

      <TitleBar>
        <OfficeButton aria-label="Office"><OfficeLogo /></OfficeButton>
        <QuickAccess>
          <IconButton aria-label="Сохранить"><SaveIcon /></IconButton>
          <IconButton aria-label="Отменить"><UndoIcon /></IconButton>
          <Caret color="#8fa9cf" />
          <IconButton aria-label="Повторить"><RedoIcon /></IconButton>
        </QuickAccess>
        <QuickMenu aria-label="Настройка панели">
          <svg width="6" height="7" viewBox="0 0 6 7"><path d="M0 0h6v1H0zM0 3h6L3 6z" fill="#34496f" /></svg>
        </QuickMenu>
        <Title><span>Документ2 - </span>Microsoft Word</Title>
        <WindowControls>
          <IconButton aria-label="Свернуть"><MinimizeIcon /></IconButton>
          <IconButton aria-label="Восстановить"><RestoreIcon /></IconButton>
          <IconButton aria-label="Закрыть"><CloseIcon /></IconButton>
        </WindowControls>
      </TitleBar>

      <TabBar>
        {tabs.map(tab => (
          <Tab key={tab} $active={tab === activeTab} onClick={() => setActiveTab(tab)}>{tab}</Tab>
        ))}
        <HelpButton aria-label="Справка"><HelpIcon /></HelpButton>
      </TabBar>

      <Ribbon>
        <ClipboardGroup />
        <FontGroup />
        <ParagraphGroup />
        <StylesGroup />
        <EditingGroup />
      </Ribbon>

      <Workspace>
        <EditorArea />
        <VerticalScroll />
      </Workspace>

      <StatusBar>
        <StatusItem $width="105px">Страница: 1 из 1</StatusItem>
        <StatusItem $width="89px">Число слов: 1</StatusItem>
        <StatusItem $width="147px"><ProofIcon /> русский</StatusItem>
        <ViewArea>
          <ViewButtons>
            {viewIcons.map((icon, i) => (
              <button key={viewNames[i]} aria-label={viewNames[i]}>
                <svg width="13" height="13" viewBox="0 0 13 13" fill="none" stroke="#59657c">{icon}</svg>
              </button>
            ))}
          </ViewButtons>
          <ZoomText>{zoom}%</ZoomText>
          <RoundButton aria-label="Уменьшить" onClick={() => setZoom(zoom - 10)}>
            <svg width="8" height="8" viewBox="0 0 8 8"><path d="M0 3h8v2H0z" fill="#44526e" /></svg>
          </RoundButton>
          <ZoomSlider type="range" min="10" max="190" value={zoom} aria-label="Масштаб" onChange={e => setZoom(Number(e.target.value))} />
          <RoundButton aria-label="Увеличить" onClick={() => setZoom(zoom + 10)}>
            <svg width="8" height="8" viewBox="0 0 8 8"><path d="M0 3h8v2H0zM3 0h2v8H3z" fill="#44526e" /></svg>
          </RoundButton>
        </ViewArea>
      </StatusBar>

      <Taskbar>
        <StartButton $bold><WindowsIcon /> Пуск</StartButton>
        <TaskButton><FolderIcon /> Алла</TaskButton>
        <TaskButton><WordIcon /> Методичка - Microsoft ...</TaskButton>
        <TaskButton $bold $pressed><WordIcon /> Документ2 - Microso...</TaskButton>
        <LanguageBadge>RU</LanguageBadge>
        <TrayDivider />
        <Tray>
          <KasperskyIcon />
          <SyncIcon />
          <NetworkIcon />
          <time>13:11</time>
        </Tray>
      </Taskbar>
    </Window>
  );
};

export default App;
